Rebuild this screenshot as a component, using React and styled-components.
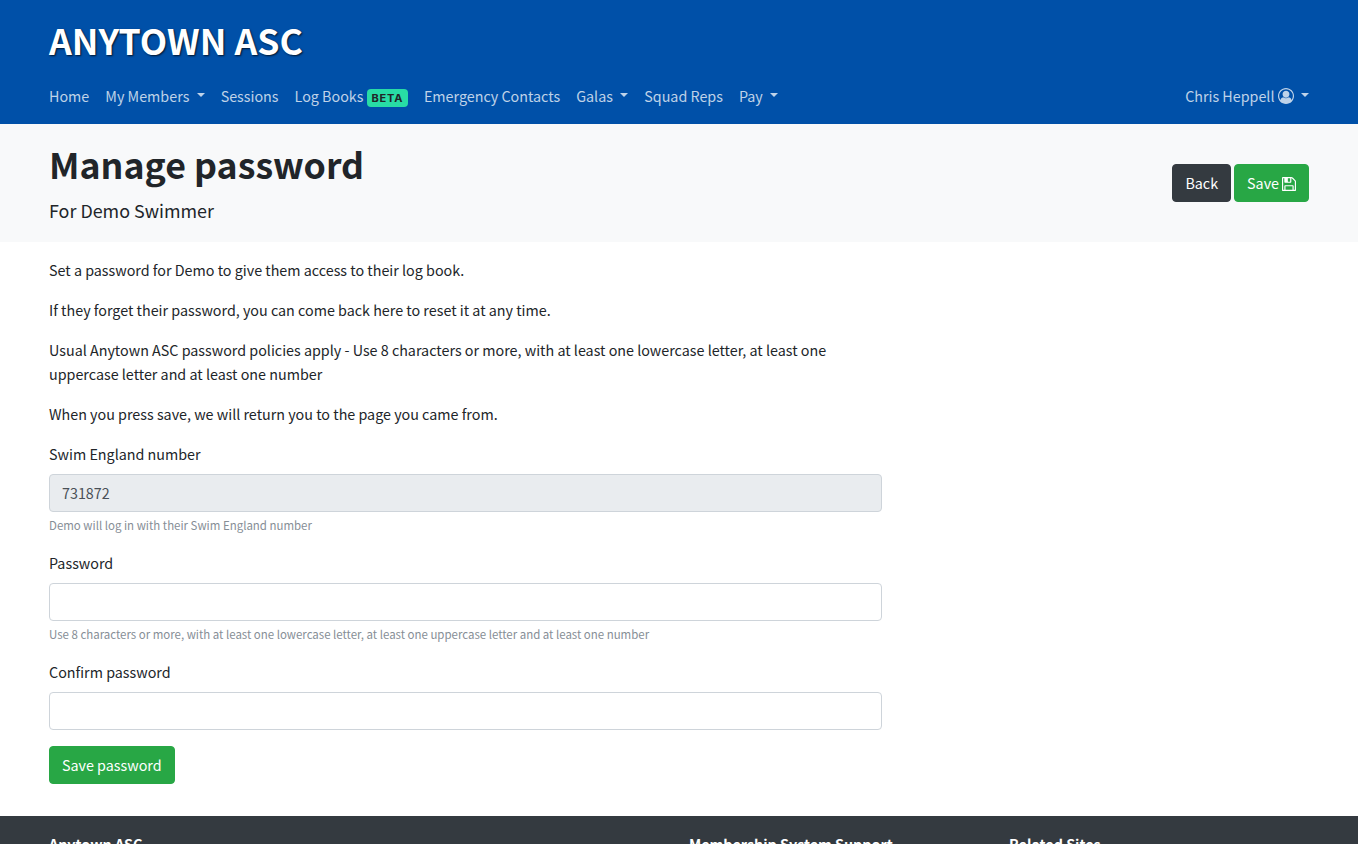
import React from "react";
import styled, { createGlobalStyle, css } from "styled-components";

const GlobalStyle = createGlobalStyle`
  *, *::before, *::after { box-sizing: border-box; }
  html { overflow: hidden; }
  body {
    margin: 0;
    height: 844px;
    overflow: hidden;
    background: #fff;
    color: #212529;
    font-family: "Noto Sans CJK SC", "Noto Sans", sans-serif;
    font-size: 14.325px;
    line-height: 24px;
  }
`;

const Container = styled.div`
  width: 1260px;
  margin: 0 auto;
`;

const Header = styled.header`
  height: 124px;
  padding-top: 16px;
  background: #0050a8;
`;

const Brand = styled.div`
  margin-bottom: 12px;
  color: #fff;
  font-size: 35.65px;
  font-weight: 700;
  line-height: 48px;
  text-transform: uppercase;
  text-shadow: 1px 1px 2px rgba(0, 0, 0, 0.75);
`;

const Nav = styled.nav`
  display: flex;
  justify-content: space-between;
`;

const NavList = styled.div`
  display: flex;
  gap: 16px;
`;

const NavLink = styled.a`
  height: 40px;
  padding: 8px 0;
  color: rgba(255, 255, 255, 0.75);
  white-space: nowrap;

  ${(p) =>
    p.$menu &&
    css`
      &::after {
        content: "";
        display: inline-block;
        margin-left: 7.3px;
        vertical-align: 5px;
        border-top: 4.8px solid;
        border-right: 4.8px solid transparent;
        border-left: 4.8px solid transparent;
      }
    `}
`;

const Badge = styled.span`
  display: inline-block;
  padding: 3px 4.6px 3px 4.9px;
  border-radius: 4px;
  background: #28dca5;
  color: #212529;
  font-family: Inter, "Liberation Sans", sans-serif;
  font-size: 11px;
  font-weight: 700;
  line-height: 12px;
  letter-spacing: 0.8px;
  vertical-align: baseline;
`;

const PageHeader = styled.section`
  padding: 16px 0;
  background: #f8f9fa;
`;

const PageHeaderRow = styled(Container)`
  display: flex;
  align-items: center;
  justify-content: space-between;
`;

const Title = styled.h1`
  margin: 0 0 7px;
  font-size: 35.72px;
  font-weight: 700;
  line-height: 48px;
`;

const Lead = styled.p`
  margin: 0 0 1px;
  font-size: 17.9px;
  line-height: 30px;
`;

const Actions = styled.div`
  display: flex;
  gap: 3px;
`;

const Button = styled.button`
  height: 38px;
  padding: 6px 12px;
  border: 1px solid ${(p) => p.$color};
  border-radius: 4px;
  background: ${(p) => p.$color};
  color: #fff;
  font: inherit;
  white-space: nowrap;
`;

const Form = styled.form`
  width: 833px;
  padding: 16px 0 32px;
`;

const Text = styled.p`
  margin: 0 0 16px;
`;

const Field = styled.div`
  margin-bottom: 16px;
`;

const Label = styled.label`
  display: block;
  margin-bottom: 8px;
`;

const Input = styled.input`
  display: block;
  width: 100%;
  height: 38px;
  padding: 5px 12px 7px;
  border: 1px solid #ced4da;
  border-radius: 4px;
  background: ${(p) => (p.readOnly ? "#e9ecef" : "#fff")};
  color: #495057;
  font: inherit;
`;

const Help = styled.small`
  display: block;
  height: 19px;
  margin-top: 4px;
  color: #868e96;
  font-size: 11.46px;
  line-height: 19.2px;
`;

const Footer = styled.footer`
  padding: 16px 0;
  background: #343a40;
  color: #fff;
`;

const FooterGrid = styled(Container)`
  display: grid;
  grid-template-columns: 640px 320px 300px;
  font-weight: 700;
`;

const Icon = styled.svg`
  width: ${(p) => p.$size}px;
  height: ${(p) => p.$size}px;
  fill: currentColor;
  vertical-align: -2px;
`;

const FloppyIcon = styled(Icon)`
  margin-left: 3px;
`;

const UserCircle = () => (
  <Icon $size={16} viewBox="0 0 1792 1792">
    <path d="M896 0q182 0 348 71t286 191 191 286 71 348q0 181-70.5 347t-190.5 286-286 191.5-349 71.5-349-71-285.5-191.5-190.5-286-71-347.5 71-348 191-286 286-191 348-71zm619 1351q149-205 149-455 0-156-61-298t-164-245-245-164-298-61-298 61-245 164-164 245-61 298q0 250 149 455 66-327 306-327 131 128 313 128t313-128q240 0 306 327zm-235-647q0-159-112.5-271.5t-271.5-112.5-271.5 112.5-112.5 271.5 112.5 271.5 271.5 112.5 271.5-112.5 112.5-271.5z" />
  </Icon>
);

const Floppy = () => (
  <FloppyIcon $size={14} viewBox="128 128 1536 1536">
    <path d="M512 1536h768v-384h-768v384zm896 0h128v-896q0-14-10-38.5t-20-34.5l-281-281q-10-10-34-20t-39-10v416q0 40-28 68t-68 28h-576q-40 0-68-28t-28-68v-416h-128v1280h128v-416q0-40 28-68t68-28h832q40 0 68 28t28 68v416zm-384-928v-320q0-13-9.5-22.5t-22.5-9.5h-192q-13 0-22.5 9.5t-9.5 22.5v320q0 13 9.5 22.5t22.5 9.5h192q13 0 22.5-9.5t9.5-22.5zm640 32v928q0 40-28 68t-68 28h-1344q-40 0-68-28t-28-68v-1344q0-40 28-68t68-28h928q40 0 88 20t76 48l280 280q28 28 48 76t20 88z" />
  </FloppyIcon>
);

export default function App() {
  return (
    <>
      <GlobalStyle />
      <Header>
        <Container>
          <Brand>Anytown ASC</Brand>
          <Nav>
            <NavList>
              <NavLink>Home</NavLink>
              <NavLink $menu>My Members</NavLink>
              <NavLink>Sessions</NavLink>
              <NavLink>
                Log Books <Badge>BETA</Badge>
              </NavLink>
              <NavLink>Emergency Contacts</NavLink>
              <NavLink $menu>Galas</NavLink>
              <NavLink>Squad Reps</NavLink>
              <NavLink $menu>Pay</NavLink>
            </NavList>
            <NavLink $menu>
              Chris Heppell <UserCircle />
            </NavLink>
          </Nav>
        </Container>
      </Header>
      <PageHeader>
        <PageHeaderRow>
          <div>
            <Title>Manage password</Title>
            <Lead>For Demo Swimmer</Lead>
          </div>
          <Actions>
            <Button $color="#343a40">Back</Button>
            <Button $color="#28a745">
              Save
              <Floppy />
            </Button>
          </Actions>
        </PageHeaderRow>
      </PageHeader>
      <Container>
        <Form>
          <Text>Set a password for Demo to give them access to their log book.</Text>
          <Text>If they forget their password, you can come back here to reset it at any time.</Text>
          <Text>
            Usual Anytown ASC password policies apply - Use 8 characters or more, with at least one
            lowercase letter, at least one uppercase letter and at least one number
          </Text>
          <Text>When you press save, we will return you to the page you came from.</Text>
          <Field>
            <Label htmlFor="number">Swim England number</Label>
            <Input id="number" readOnly value="731872" />
            <Help>Demo will log in with their Swim England number</Help>
          </Field>
          <Field>
            <Label htmlFor="password">Password</Label>
            <Input id="password" type="password" />
            <Help>
              Use 8 characters or more, with at least one lowercase letter, at least one uppercase
              letter and at least one number
            </Help>
          </Field>
          <Field>
            <Label htmlFor="confirm">Confirm password</Label>
            <Input id="confirm" type="password" />
          </Field>
          <Button type="button" $color="#28a745">Save password</Button>
        </Form>
      </Container>
      <Footer>
        <FooterGrid>
          <div>Anytown ASC</div>
          <div>Membership System Support</div>
          <div>Related Sites</div>
        </FooterGrid>
      </Footer>
    </>
  );
}
